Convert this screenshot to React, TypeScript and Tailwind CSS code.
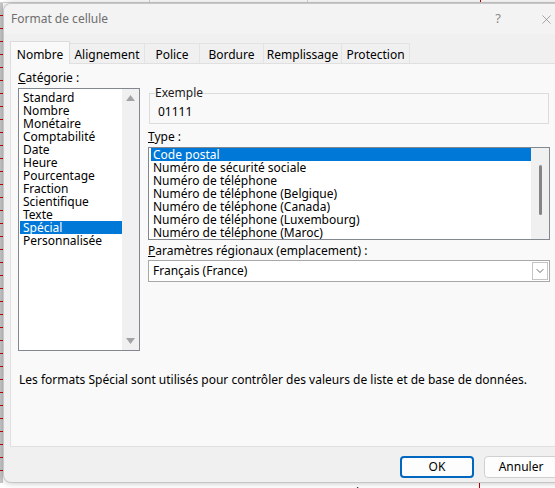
import { ChevronDown, X } from 'lucide-react'

const categories = [
  'Standard',
  'Nombre',
  'Monétaire',
  'Comptabilité',
  'Date',
  'Heure',
  'Pourcentage',
  'Fraction',
  'Scientifique',
  'Texte',
  'Spécial',
  'Personnalisée',
]

const types = [
  'Code postal',
  'Numéro de sécurité sociale',
  'Numéro de téléphone',
  'Numéro de téléphone (Belgique)',
  'Numéro de téléphone (Canada)',
  'Numéro de téléphone (Luxembourg)',
  'Numéro de téléphone (Maroc)',
]

const tabs = [
  { nom: 'Nombre', w: 'w-[60px]' },
  { nom: 'Alignement', w: 'w-[76px]' },
  { nom: 'Police', w: 'w-[56px]' },
  { nom: 'Bordure', w: 'w-[65px]' },
  { nom: 'Remplissage', w: 'w-[79px]' },
  { nom: 'Protection', w: 'w-[69px]' },
]

function Triangle({ up }: { up?: boolean }) {
  return (
    <svg width="9" height="6" viewBox="0 0 9 6" className="block">
      <path d={up ? 'M0 6 L4.5 0 L9 6 Z' : 'M0 0 L4.5 6 L9 0 Z'} fill="#a3a3a3" />
    </svg>
  )
}

export default function App() {
  return (
    <div className="relative h-[488px] w-[555px] overflow-hidden bg-white font-['Noto_Sans',sans-serif] text-[12px] text-black">
      {/* feuille Excel derrière la fenêtre */}
      <div className="flex h-full flex-col">
        <div className="flex h-[3px] border-b border-[#d4d4d4]">
          <div className="h-full w-[150px] border-r border-[#d4d4d4]" />
          <div className="h-full w-[158px] border-r border-[#d4d4d4]" />
          <div className="h-full w-[173px] border-r border-[#c00000]" />
        </div>
        <div className="w-[3px] flex-1 bg-[repeating-linear-gradient(to_bottom,#c7c7c7_0px,#c7c7c7_12px,#c00000_12px,#c00000_13px)]" />
        <div className="flex h-[5px] overflow-hidden pl-[226px] text-[14px] leading-[20px]">
          <span className="w-[130px]">0111</span>
          <span className="w-[124px] border-r border-[#c00000] text-[12px]">la rue</span>
          <span className="pl-[4px] font-bold">Rouge</span>
        </div>
      </div>

      {/* fenêtre */}
      <div className="absolute left-[3px] top-[3px] flex h-[480px] w-[575px] flex-col rounded-l-[8px] border border-[#c6c6c6] bg-[#f0f0f0] shadow-[0_0_6px_rgba(0,0,0,0.25)]">
        <div className="flex h-[30px] items-center rounded-tl-[8px] bg-[#f3f3f3] pl-[7px]">
          <span className="text-[12px] text-[#6e6e6e]">Format de cellule</span>
          <span className="ml-auto mr-[38px] text-[13px] text-[#8a8a8a]">?</span>
          <X className="mr-[23px] text-[#777]" size={15} strokeWidth={1} />
        </div>

        <div className="ml-[6px] mt-[7px] flex items-end">
          {tabs.map((t, i) =>
            i === 0 ? (
              <div
                key={t.nom}
                className={`relative z-10 -mb-px h-[23px] ${t.w} border border-b-0 border-[#dcdcdc] bg-[#f9f9f9] pt-[5px] text-center leading-[16px]`}
              >
                {t.nom}
              </div>
            ) : (
              <div
                key={t.nom}
                className={`-ml-px h-[20px] ${t.w} border border-b-0 border-[#e3e3e3] bg-[#f0f0f0] pt-[3px] text-center leading-[16px]`}
              >
                {t.nom}
              </div>
            ),
          )}
        </div>

        <div className="ml-[6px] flex h-[384px] flex-col border border-[#e0e0e0] bg-[#f9f9f9] pl-[7px]">
          <div className="flex items-start">
            <div className="flex w-[122px] flex-col pt-[6px]">
              <div className="h-[16px] leading-[16px]">
                <span className="underline">C</span>atégorie :
              </div>
              <div className="mt-[2px] flex h-[263px] border border-[#828790] bg-white">
                <div className="flex flex-1 flex-col pt-[2px]">
                  {categories.map(c => (
                    <div
                      key={c}
                      className={`ml-px h-[13px] pl-[3px] leading-[13px] ${c === 'Spécial' ? 'bg-[#0078d7] text-white' : ''}`}
                    >
                      {c}
                    </div>
                  ))}
                </div>
                <div className="flex w-[17px] flex-col items-center justify-between bg-[#f0f0f0] py-[6px]">
                  <Triangle up />
                  <Triangle />
                </div>
              </div>
            </div>

            <div className="ml-[8px] flex w-[402px] flex-col pt-[22px]">
              <fieldset className="mx-px h-[38px] border border-[#dcdcdc] px-[5px]">
                <legend className="leading-[14px] text-[#1a1a1a]">Exemple</legend>
                <div className="pl-[3px] pt-[5px] leading-[14px]">01111</div>
              </fieldset>

              <div className="mt-[5px] h-[16px] leading-[16px]">
                <span className="underline">T</span>ype :
              </div>
              <div className="mt-[2px] flex h-[93px] border border-[#828790] bg-white">
                <div className="flex flex-1 flex-col">
                  {types.map((t, i) => (
                    <div
                      key={t}
                      className={`ml-[2px] h-[13px] pl-[2px] leading-[13px] ${i === 0 ? 'bg-[#0078d7] text-white' : ''}`}
                    >
                      {t}
                    </div>
                  ))}
                </div>
                <div className="flex w-[18px] justify-center bg-[#f0f0f0] pt-[17px]">
                  <div className="h-[50px] w-[3px] rounded-full bg-[#858585]" />
                </div>
              </div>

              <div className="mt-[3px] h-[16px] leading-[16px]">
                <span className="underline">P</span>aramètres régionaux (emplacement) :
              </div>
              <div className="mt-px flex h-[22px] items-center border border-[#a8a8a8] bg-white pl-[4px]">
                <span className="flex-1">Français (France)</span>
                <div className="mr-px flex h-[18px] w-[16px] items-center justify-center border border-[#c4c4c4] bg-white">
                  <ChevronDown size={12} strokeWidth={1.6} className="text-[#444]" />
                </div>
              </div>
            </div>
          </div>

          <div className="mt-[21px] h-[16px] pl-px leading-[16px]">
            Les formats Spécial sont utilisés pour contrôler des valeurs de liste et de base de données.
          </div>
        </div>

        <div className="mt-[9px] flex gap-[10px] pl-[396px]">
          <button className="h-[22px] w-[74px] rounded-[4px] border-2 border-[#0067c0] bg-[#fdfdfd] leading-[16px]">
            OK
          </button>
          <button className="h-[22px] w-[74px] rounded-[4px] border border-[#d0d0d0] bg-[#fdfdfd] leading-[16px]">
            Annuler
          </button>
        </div>
      </div>
    </div>
  )
}
